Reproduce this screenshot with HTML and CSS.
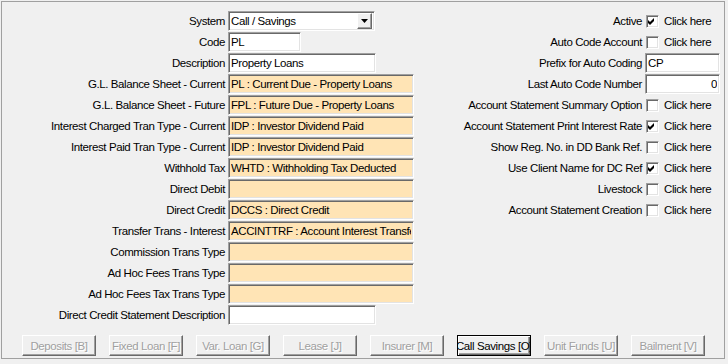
FILE: index.html
```html
<!DOCTYPE html>
<html lang="en">
<head>
    <meta charset="UTF-8">
    <title>Account Type - Call / Savings</title>
    <link rel="stylesheet" href="styles.css">
</head>
<body>
    <div class="frame">
        <div class="panels">
            <div class="fields">
                <label>System</label>
                <div class="box combo w-combo">
                    <span>Call / Savings</span>
                    <span class="drop"><svg width="7" height="4" viewBox="0 0 7 4"><polygon points="0,0 7,0 3.5,4" fill="#000"/></svg></span>
                </div>

                <label>Code</label>
                <input class="box w-code" value="PL">

                <label>Description</label>
                <input class="box w-desc" value="Property Loans">

                <label>G.L. Balance Sheet - Current</label>
                <input class="box lookup" value="PL : Current Due - Property Loans">

                <label>G.L. Balance Sheet - Future</label>
                <input class="box lookup" value="FPL : Future Due - Property Loans">

                <label>Interest Charged Tran Type - Current</label>
                <input class="box lookup" value="IDP : Investor Dividend Paid">

                <label>Interest Paid Tran Type - Current</label>
                <input class="box lookup" value="IDP : Investor Dividend Paid">

                <label>Withhold Tax</label>
                <input class="box lookup" value="WHTD : Withholding Tax Deducted">

                <label>Direct Debit</label>
                <input class="box lookup" value="">

                <label>Direct Credit</label>
                <input class="box lookup" value="DCCS : Direct Credit">

                <label>Transfer Trans - Interest</label>
                <input class="box lookup" value="ACCINTTRF : Account Interest Transfer">

                <label>Commission Trans Type</label>
                <input class="box lookup" value="">

                <label>Ad Hoc Fees Trans Type</label>
                <input class="box lookup" value="">

                <label>Ad Hoc Fees Tax Trans Type</label>
                <input class="box lookup" value="">

                <label>Direct Credit Statement Description</label>
                <input class="box w-desc" value="">
            </div>

            <div class="options">
                <label>Active</label>
                <div class="tick"><span class="check"><svg width="11" height="11" viewBox="0 0 11 11"><polygon points="1,4 3,6 7,2 7,5 3,9 1,7" fill="#000"/></svg></span><span>Click here</span></div>

                <label>Auto Code Account</label>
                <div class="tick"><span class="check"></span><span>Click here</span></div>

                <label>Prefix for Auto Coding</label>
                <input class="box" value="CP">

                <label>Last Auto Code Number</label>
                <input class="box number" value="0">

                <label>Account Statement Summary Option</label>
                <div class="tick"><span class="check"></span><span>Click here</span></div>

                <label>Account Statement Print Interest Rate</label>
                <div class="tick"><span class="check"><svg width="11" height="11" viewBox="0 0 11 11"><polygon points="1,4 3,6 7,2 7,5 3,9 1,7" fill="#000"/></svg></span><span>Click here</span></div>

                <label>Show Reg. No. in DD Bank Ref.</label>
                <div class="tick"><span class="check"></span><span>Click here</span></div>

                <label>Use Client Name for DC Ref</label>
                <div class="tick"><span class="check"><svg width="11" height="11" viewBox="0 0 11 11"><polygon points="1,4 3,6 7,2 7,5 3,9 1,7" fill="#000"/></svg></span><span>Click here</span></div>

                <label>Livestock</label>
                <div class="tick"><span class="check"></span><span>Click here</span></div>

                <label>Account Statement Creation</label>
                <div class="tick"><span class="check"></span><span>Click here</span></div>
            </div>
        </div>

        <div class="buttons">
            <button disabled><span>Deposits [B]</span></button>
            <button disabled><span>Fixed Loan [F]</span></button>
            <button disabled><span>Var. Loan [G]</span></button>
            <button disabled><span>Lease [J]</span></button>
            <button disabled><span>Insurer [M]</span></button>
            <button class="current"><span>Call Savings [O]</span></button>
            <button disabled><span>Unit Funds [U]</span></button>
            <button disabled><span>Bailment [V]</span></button>
        </div>
    </div>
</body>
</html>
```

FILE: styles.css
```css
body {
    margin: 0;
    background-color: #f0f0f0;
    font-family: "Liberation Sans", Arial, sans-serif;
    font-size: 11.5px;
    letter-spacing: -0.4px;
    color: #000;
}
.frame {
    margin: 1px;
    width: 722px;
    height: 356px;
    border: 1px solid #a0a0a0;
}
.panels {
    display: flex;
    justify-content: space-between;
    align-items: flex-start;
    padding: 9px 4px 0 0;
}
.fields, .options {
    display: grid;
    grid-auto-rows: 20px;
    row-gap: 1px;
    column-gap: 3px;
    align-items: center;
}
.fields {
    grid-template-columns: 223px 186px;
}
.options {
    grid-template-columns: auto 75px;
}
label {
    text-align: right;
    white-space: nowrap;
}
.box {
    box-sizing: border-box;
    width: 100%;
    height: 20px;
    margin: 0;
    padding: 0 2px;
    font: inherit;
    letter-spacing: inherit;
    color: #000;
    background: #fff;
    border: 1px solid;
    border-color: #a0a0a0 #fff #fff #a0a0a0;
    box-shadow: inset 1px 1px 0 #696969, inset -1px -1px 0 #e3e3e3;
    outline: none;
}
.lookup {
    background: #ffe4b5;
}
.number {
    text-align: right;
}
.w-code {
    width: 73px;
}
.w-desc {
    width: 148px;
}
.w-combo {
    width: 147px;
}
.combo {
    display: flex;
    align-items: center;
    justify-content: space-between;
    padding: 0 2px;
}
.drop {
    box-sizing: border-box;
    display: flex;
    align-items: center;
    justify-content: center;
    width: 15px;
    height: 16px;
    background: #f0f0f0;
    border: 1px solid;
    border-color: #fff #696969 #696969 #fff;
    box-shadow: inset -1px -1px 0 #a0a0a0;
}
.tick {
    display: flex;
    align-items: center;
    white-space: nowrap;
}
.check {
    box-sizing: border-box;
    display: flex;
    align-items: center;
    justify-content: center;
    width: 13px;
    height: 13px;
    margin-left: 1px;
    margin-right: 5px;
    background: #fff;
    border: 1px solid;
    border-color: #a0a0a0 #fff #fff #a0a0a0;
    box-shadow: inset 1px 1px 0 #696969, inset -1px -1px 0 #e3e3e3;
}
.buttons {
    display: flex;
    gap: 13px;
    padding: 10px 0 0 20px;
}
.buttons button {
    box-sizing: border-box;
    display: flex;
    align-items: center;
    justify-content: center;
    overflow: hidden;
    width: 74px;
    height: 21px;
    padding: 0;
    font: inherit;
    letter-spacing: inherit;
    white-space: nowrap;
    color: #a0a0a0;
    text-shadow: 1px 1px 0 #fff;
    background: #f0f0f0;
    border: 1px solid;
    border-color: #fff #696969 #696969 #fff;
    box-shadow: inset -1px -1px 0 #a0a0a0;
}
.buttons .current {
    color: #000;
    text-shadow: none;
    border-color: #000;
    box-shadow: inset 1px 1px 0 #fff, inset -1px -1px 0 #696969, inset -2px -2px 0 #a0a0a0;
}
```
